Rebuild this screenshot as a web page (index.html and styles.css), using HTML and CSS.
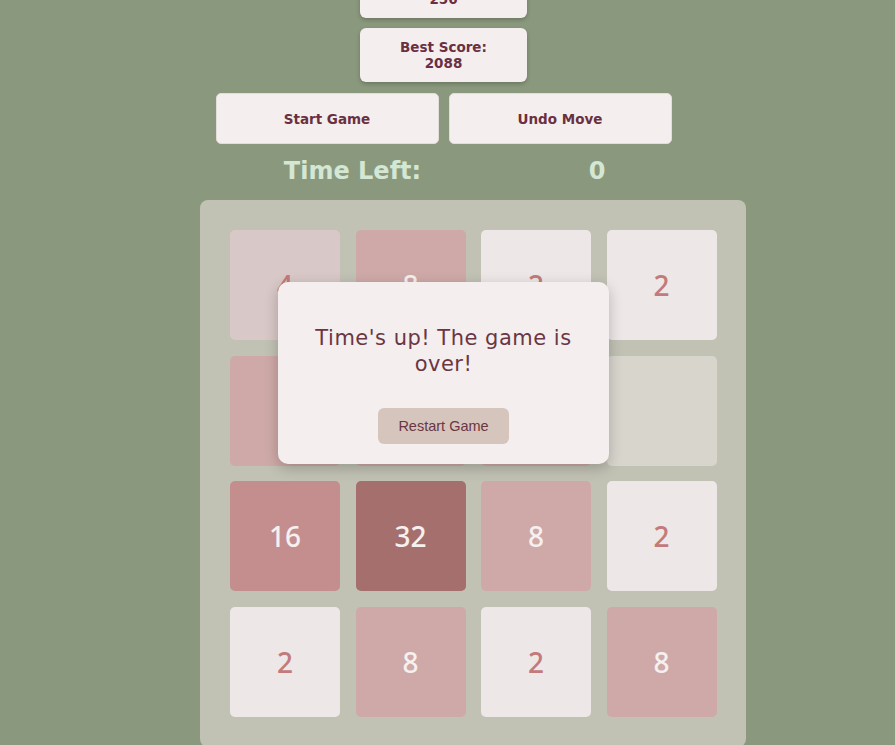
FILE: index.html
```html
<!DOCTYPE html>
<html>
<head>
<meta charset="utf-8">
<link rel="stylesheet" href="styles.css">
</head>
<body>
<div class="page">
  <div class="scores">
    <div class="score">Score:<br>256</div>
    <div class="score">Best Score:<br>2088</div>
  </div>
  <div class="controls">
    <button class="btn">Start Game</button>
    <button class="btn">Undo Move</button>
  </div>
  <div class="timer"><span class="timer-label">Time Left:</span><span class="timer-value">0</span></div>
  <div class="board">
    <div class="tile t4">4</div>
    <div class="tile t8">8</div>
    <div class="tile t2">2</div>
    <div class="tile t2">2</div>
    <div class="tile t8">8</div>
    <div class="tile t8">8</div>
    <div class="tile t8">8</div>
    <div class="tile empty"></div>
    <div class="tile t16">16</div>
    <div class="tile t32">32</div>
    <div class="tile t8">8</div>
    <div class="tile t2">2</div>
    <div class="tile t2">2</div>
    <div class="tile t8">8</div>
    <div class="tile t2">2</div>
    <div class="tile t8">8</div>
  </div>
  <div class="modal">
    <p class="modal-text">Time's up! The game is over!</p>
    <button class="restart">Restart Game</button>
  </div>
</div>
</body>
</html>
```

FILE: styles.css
```css
html, body {
  margin: 0;
  padding: 0;
  background: #8a997d;
  overflow: hidden;
}
.page {
  position: relative;
  display: flow-root;
  width: 887px;
  height: 745px;
  overflow: hidden;
  font-family: "DejaVu Sans", "Noto Sans", sans-serif;
}
.scores {
  display: flex;
  flex-direction: column;
  align-items: center;
  gap: 10px;
  margin-top: -36px;
}
.score {
  width: 167px;
  height: 54px;
  box-sizing: border-box;
  background: #f4efee;
  border-radius: 6px;
  box-shadow: 0 2px 4px rgba(0,0,0,0.22);
  color: #6b2f42;
  font-weight: bold;
  font-size: 13.5px;
  line-height: 16px;
  text-align: center;
  display: flex;
  align-items: center;
  justify-content: center;
}
.controls {
  display: flex;
  justify-content: center;
  gap: 10px;
  margin-top: 11px;
}
.btn {
  width: 223px;
  height: 51px;
  background: #f4efee;
  border: 1px solid #e2dcdb;
  border-radius: 5px;
  color: #6b2f42;
  font-family: "DejaVu Sans", sans-serif;
  font-weight: bold;
  font-size: 13.5px;
  padding: 0;
}
.timer {
  display: flex;
  padding-left: 261px;
  margin-top: 9px;
  height: 36px;
  align-items: center;
  color: #d4e6d4;
  font-weight: bold;
  font-size: 24px;
  text-align: center;
}
.timer-label { width: 183px; }
.timer-value { width: 182px; margin-left: 62px; }
.board {
  margin: 11px 0 0 200px;
  width: 546px;
  box-sizing: border-box;
  padding: 30px 29px 30px 30px;
  background: #c1c2b4;
  border-radius: 8px;
  display: grid;
  grid-template-columns: repeat(4, 110px);
  grid-auto-rows: 110px;
  column-gap: 15.5px;
  row-gap: 15.5px;
}
.tile {
  border-radius: 5px;
  display: flex;
  align-items: center;
  justify-content: center;
  font-family: "Noto Sans", "DejaVu Sans", sans-serif;
  font-size: 28px;
  font-weight: 500;
}
.empty { background: #d7d5cc; }
.t2 { background: #ede7e7; color: #c27a7a; }
.t4 { background: #d8c8c7; color: #c27a7a; }
.t8 { background: #cea9a7; color: #f6f0ef; }
.t16 { background: #c48e8e; color: #f6f0ef; }
.t32 { background: #a56f6e; color: #f6f0ef; }
.modal {
  position: absolute;
  left: 278px;
  top: 282px;
  width: 331px;
  height: 182px;
  box-sizing: border-box;
  background: #f4efee;
  border-radius: 10px;
  box-shadow: 0 4px 14px rgba(0,0,0,0.22);
  display: flex;
  flex-direction: column;
  align-items: center;
  padding-top: 43px;
}
.modal-text {
  margin: 0;
  width: 270px;
  text-align: center;
  color: #6b3643;
  font-size: 21px;
  line-height: 26px;
  letter-spacing: 0.5px;
}
.restart {
  margin-top: 31px;
  width: 131px;
  height: 36px;
  background: #d5c5bd;
  border: none;
  border-radius: 6px;
  color: #6b3643;
  font-family: "Liberation Sans", Arial, sans-serif;
  font-size: 14.5px;
  padding: 0;
}
```
